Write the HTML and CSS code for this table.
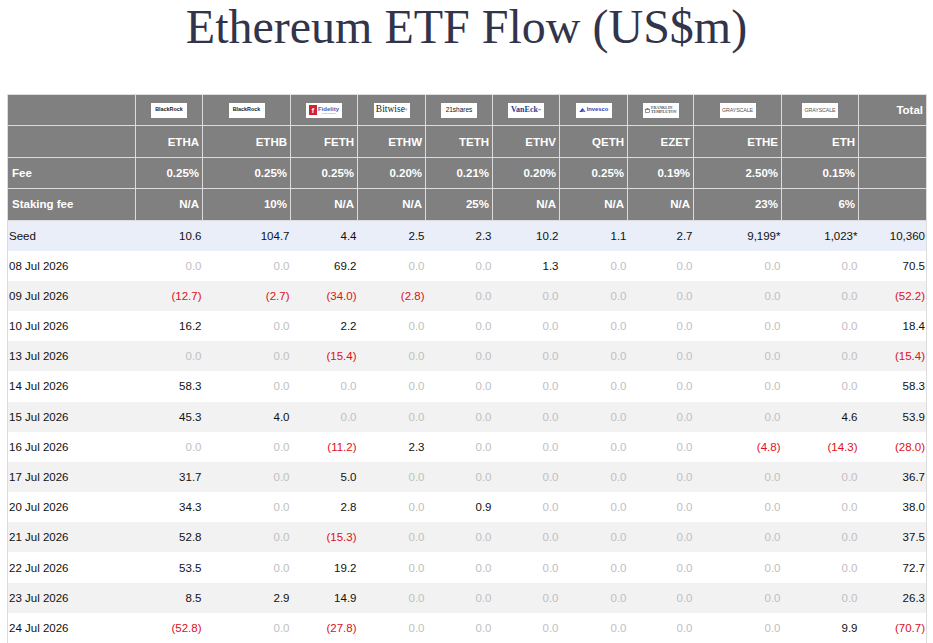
FILE: index.html
```html
<!DOCTYPE html>
<html lang="en">
<head>
<meta charset="utf-8">
<title>Ethereum ETF Flow (US$m)</title>
<link rel="stylesheet" href="styles.css">
</head>
<body>
<h1 class="title">Ethereum ETF Flow (US$m)</h1>
<div class="wrap">
<table class="flow">
  <colgroup>
    <col class="c-label"><col class="c-67"><col class="c-88"><col class="c-67"><col class="c-68"><col class="c-67"><col class="c-67"><col class="c-68"><col class="c-66"><col class="c-88"><col class="c-77"><col class="c-68">
  </colgroup>
  <thead>
    <tr class="h-logo">
      <th></th>
      <th class="lg"><span class="logo blackrock">BlackRock</span></th>
      <th class="lg"><span class="logo blackrock">BlackRock</span></th>
      <th class="lg"><span class="logo fidelity"><span class="fid-sq">f</span><span class="fid-txt">Fidelity<span class="fid-sub">INVESTMENTS</span></span></span></th>
      <th class="lg"><span class="logo bitwise">Bitwise<sup>®</sup></span></th>
      <th class="lg"><span class="logo shares">21shares</span></th>
      <th class="lg"><span class="logo vaneck">VanEck<sup>™</sup></span></th>
      <th class="lg"><span class="logo invesco"><svg class="inv-ic" viewBox="0 0 8 5" width="7" height="4.5"><path d="M0 5 L4 0 L8 5 Z" fill="#2d3fb8"/><path d="M2 5 L5 2 L8 5 Z" fill="#6d7fe0"/></svg>Invesco</span></th>
      <th class="lg"><span class="logo franklin"><svg class="fr-ic" viewBox="0 0 6 6" width="5" height="5"><rect x="0.5" y="1.5" width="5" height="4" fill="none" stroke="#666" stroke-width="0.8"/><path d="M0 1.8 L3 0 L6 1.8 Z" fill="#666"/></svg><span class="fr-txt">FRANKLIN<br>TEMPLETON</span></span></th>
      <th class="lg"><span class="logo grayscale">GRAYSCALE</span></th>
      <th class="lg"><span class="logo grayscale">GRAYSCALE</span></th>
      <th>Total</th>
    </tr>
    <tr>
      <th></th><th>ETHA</th><th>ETHB</th><th>FETH</th><th>ETHW</th><th>TETH</th><th>ETHV</th><th>QETH</th><th>EZET</th><th>ETHE</th><th>ETH</th><th></th>
    </tr>
    <tr>
      <th class="lbl">Fee</th><th>0.25%</th><th>0.25%</th><th>0.25%</th><th>0.20%</th><th>0.21%</th><th>0.20%</th><th>0.25%</th><th>0.19%</th><th>2.50%</th><th>0.15%</th><th></th>
    </tr>
    <tr>
      <th class="lbl">Staking fee</th><th>N/A</th><th>10%</th><th>N/A</th><th>N/A</th><th>25%</th><th>N/A</th><th>N/A</th><th>N/A</th><th>23%</th><th>6%</th><th></th>
    </tr>
  </thead>
  <tbody>
    <tr class="seed"><td>Seed</td><td>10.6</td><td>104.7</td><td>4.4</td><td>2.5</td><td>2.3</td><td>10.2</td><td>1.1</td><td>2.7</td><td>9,199*</td><td>1,023*</td><td>10,360</td></tr>
    <tr><td>08 Jul 2026</td><td class="z">0.0</td><td class="z">0.0</td><td>69.2</td><td class="z">0.0</td><td class="z">0.0</td><td>1.3</td><td class="z">0.0</td><td class="z">0.0</td><td class="z">0.0</td><td class="z">0.0</td><td>70.5</td></tr>
    <tr class="alt"><td>09 Jul 2026</td><td class="neg">(12.7)</td><td class="neg">(2.7)</td><td class="neg">(34.0)</td><td class="neg">(2.8)</td><td class="z">0.0</td><td class="z">0.0</td><td class="z">0.0</td><td class="z">0.0</td><td class="z">0.0</td><td class="z">0.0</td><td class="neg">(52.2)</td></tr>
    <tr><td>10 Jul 2026</td><td>16.2</td><td class="z">0.0</td><td>2.2</td><td class="z">0.0</td><td class="z">0.0</td><td class="z">0.0</td><td class="z">0.0</td><td class="z">0.0</td><td class="z">0.0</td><td class="z">0.0</td><td>18.4</td></tr>
    <tr class="alt"><td>13 Jul 2026</td><td class="z">0.0</td><td class="z">0.0</td><td class="neg">(15.4)</td><td class="z">0.0</td><td class="z">0.0</td><td class="z">0.0</td><td class="z">0.0</td><td class="z">0.0</td><td class="z">0.0</td><td class="z">0.0</td><td class="neg">(15.4)</td></tr>
    <tr><td>14 Jul 2026</td><td>58.3</td><td class="z">0.0</td><td class="z">0.0</td><td class="z">0.0</td><td class="z">0.0</td><td class="z">0.0</td><td class="z">0.0</td><td class="z">0.0</td><td class="z">0.0</td><td class="z">0.0</td><td>58.3</td></tr>
    <tr class="alt"><td>15 Jul 2026</td><td>45.3</td><td>4.0</td><td class="z">0.0</td><td class="z">0.0</td><td class="z">0.0</td><td class="z">0.0</td><td class="z">0.0</td><td class="z">0.0</td><td class="z">0.0</td><td>4.6</td><td>53.9</td></tr>
    <tr><td>16 Jul 2026</td><td class="z">0.0</td><td class="z">0.0</td><td class="neg">(11.2)</td><td>2.3</td><td class="z">0.0</td><td class="z">0.0</td><td class="z">0.0</td><td class="z">0.0</td><td class="neg">(4.8)</td><td class="neg">(14.3)</td><td class="neg">(28.0)</td></tr>
    <tr class="alt"><td>17 Jul 2026</td><td>31.7</td><td class="z">0.0</td><td>5.0</td><td class="z">0.0</td><td class="z">0.0</td><td class="z">0.0</td><td class="z">0.0</td><td class="z">0.0</td><td class="z">0.0</td><td class="z">0.0</td><td>36.7</td></tr>
    <tr><td>20 Jul 2026</td><td>34.3</td><td class="z">0.0</td><td>2.8</td><td class="z">0.0</td><td>0.9</td><td class="z">0.0</td><td class="z">0.0</td><td class="z">0.0</td><td class="z">0.0</td><td class="z">0.0</td><td>38.0</td></tr>
    <tr class="alt"><td>21 Jul 2026</td><td>52.8</td><td class="z">0.0</td><td class="neg">(15.3)</td><td class="z">0.0</td><td class="z">0.0</td><td class="z">0.0</td><td class="z">0.0</td><td class="z">0.0</td><td class="z">0.0</td><td class="z">0.0</td><td>37.5</td></tr>
    <tr><td>22 Jul 2026</td><td>53.5</td><td class="z">0.0</td><td>19.2</td><td class="z">0.0</td><td class="z">0.0</td><td class="z">0.0</td><td class="z">0.0</td><td class="z">0.0</td><td class="z">0.0</td><td class="z">0.0</td><td>72.7</td></tr>
    <tr class="alt"><td>23 Jul 2026</td><td>8.5</td><td>2.9</td><td>14.9</td><td class="z">0.0</td><td class="z">0.0</td><td class="z">0.0</td><td class="z">0.0</td><td class="z">0.0</td><td class="z">0.0</td><td class="z">0.0</td><td>26.3</td></tr>
    <tr><td>24 Jul 2026</td><td class="neg">(52.8)</td><td class="z">0.0</td><td class="neg">(27.8)</td><td class="z">0.0</td><td class="z">0.0</td><td class="z">0.0</td><td class="z">0.0</td><td class="z">0.0</td><td class="z">0.0</td><td>9.9</td><td class="neg">(70.7)</td></tr>
  </tbody>
</table>
</div>
</body>
</html>
```

FILE: styles.css
```css
html, body {
  margin: 0;
  padding: 0;
  background: #ffffff;
}

.title {
  margin: 0;
  font-family: "Liberation Serif", "Times New Roman", serif;
  font-weight: normal;
  font-size: 48px;
  line-height: 54px;
  color: #31344a;
  text-align: center;
}

.wrap {
  padding: 40px 0 0 7px;
}

.flow {
  width: 920px;
  table-layout: fixed;
  border-collapse: collapse;
  border: 1px solid #dcdcdc;
  font-family: "Liberation Sans", Arial, sans-serif;
  font-size: 11.5px;
}

.c-label { width: 128px; }
.c-66 { width: 66px; }
.c-67 { width: 67px; }
.c-68 { width: 68px; }
.c-77 { width: 77px; }
.c-88 { width: 88px; }

.flow th {
  background: #808080;
  color: #ffffff;
  font-weight: bold;
  text-align: right;
  padding: 0 3px 0 2px;
  border: 1px solid #dcdcdc;
  height: 30.4px;
  vertical-align: middle;
  white-space: nowrap;
}

.flow th.lbl {
  text-align: left;
  padding-left: 4px;
}

.flow th.lg {
  text-align: center;
  padding: 0;
}

.flow td {
  height: 30.2px;
  padding: 0 1px 0 1px;
  text-align: right;
  color: #111111;
  vertical-align: middle;
  white-space: nowrap;
}

.flow td:first-child {
  text-align: left;
}

.flow tr.seed td {
  background: #e9eef8;
  height: 30px;
}

.flow tr.alt td {
  background: #f2f2f2;
}

.flow td.z {
  color: #c0c0c0;
}

.flow td.neg {
  color: #dd1020;
}

/* logos */
.logo {
  display: inline-flex;
  align-items: center;
  justify-content: center;
  width: 36px;
  height: 15px;
  background: #ffffff;
  vertical-align: middle;
  overflow: hidden;
  white-space: nowrap;
  line-height: 1;
}

.blackrock {
  font-family: "Liberation Sans", Arial, sans-serif;
  font-weight: bold;
  font-size: 5.4px;
  color: #222222;
}

.fidelity {
  gap: 1px;
}

.fid-sq {
  display: inline-flex;
  align-items: center;
  justify-content: center;
  width: 8px;
  height: 10px;
  background: #d4232e;
  color: #ffffff;
  font-family: "Liberation Sans", Arial, sans-serif;
  font-weight: bold;
  font-size: 7px;
}

.fid-txt {
  display: inline-flex;
  flex-direction: column;
  font-family: "Liberation Sans", Arial, sans-serif;
  font-weight: bold;
  font-size: 6px;
  color: #3b63b8;
  line-height: 6px;
}

.fid-sub {
  font-size: 2px;
  line-height: 2px;
  color: #8a8a8a;
  font-weight: normal;
}

.bitwise {
  font-family: "Liberation Serif", "Times New Roman", serif;
  font-size: 9.5px;
  color: #1a1a1a;
  font-weight: normal;
}

.bitwise sup,
.vaneck sup {
  font-size: 3px;
  vertical-align: 4px;
}

.shares {
  font-family: "Liberation Sans", Arial, sans-serif;
  font-weight: normal;
  font-size: 6.5px;
  color: #111111;
}

.vaneck {
  font-family: "Liberation Serif", "Times New Roman", serif;
  font-weight: bold;
  font-size: 8px;
  color: #23408e;
}

.invesco {
  gap: 1px;
  font-family: "Liberation Sans", Arial, sans-serif;
  font-weight: bold;
  font-size: 5.8px;
  color: #2d3fb8;
}

.franklin {
  gap: 1.5px;
}

.fr-txt {
  font-family: "Liberation Serif", "Times New Roman", serif;
  font-weight: bold;
  font-size: 4px;
  line-height: 4.2px;
  color: #555555;
  text-align: left;
}

.grayscale {
  font-family: "Liberation Sans", Arial, sans-serif;
  font-weight: normal;
  font-size: 5.3px;
  color: #555555;
  letter-spacing: -0.1px;
}
```
